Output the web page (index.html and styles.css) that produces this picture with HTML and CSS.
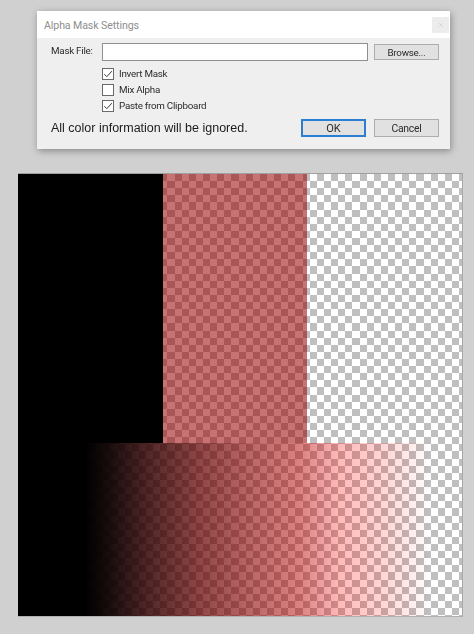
FILE: index.html
```html
<!DOCTYPE html>
<html lang="en">
<head>
<meta charset="utf-8">
<title>Alpha Mask Settings</title>
<link rel="stylesheet" href="styles.css">
</head>
<body>
<section class="dialog">
  <header class="titlebar">
    <span class="title">Alpha Mask Settings</span>
    <span class="close"><svg viewBox="0 0 6 6" width="6" height="6"><path d="M1 1l4 4M5 1L1 5" stroke="#d4d4d4" stroke-width=".8" fill="none"/></svg></span>
  </header>
  <div class="body">
    <div class="file-row">
      <span class="label">Mask File:</span>
      <div class="input"></div>
      <div class="btn browse">Browse...</div>
    </div>
    <div class="checks">
      <div class="check"><span class="box"><svg viewBox="0 0 12 12" width="10" height="10"><path d="M1.6 6.2l3 3L10.6 2.6" stroke="#3a3a3a" stroke-width="1.2" fill="none"/></svg></span>Invert Mask</div>
      <div class="check"><span class="box"></span>Mix Alpha</div>
      <div class="check"><span class="box"><svg viewBox="0 0 12 12" width="10" height="10"><path d="M1.6 6.2l3 3L10.6 2.6" stroke="#3a3a3a" stroke-width="1.2" fill="none"/></svg></span>Paste from Clipboard</div>
    </div>
    <div class="foot">
      <span class="note">All color information will be ignored.</span>
      <div class="btn ok">OK</div>
      <div class="btn cancel">Cancel</div>
    </div>
  </div>
</section>
<main class="canvas">
  <div class="top-row">
    <div class="black"></div>
    <div class="tint"></div>
    <div class="clear"></div>
  </div>
  <div class="ramp"></div>
</main>
</body>
</html>
```
FILE: styles.css
```css
* { box-sizing: border-box; }
html, body { margin: 0; height: 100%; }
body {
  width: 474px;
  height: 634px;
  overflow: hidden;
  background: #d0d0d0;
  padding-top: 11px;
  font-family: Roboto, "Noto Sans", sans-serif;
  font-size: 9.8px;
  letter-spacing: -.25px;
  color: #2b2b2b;
}
.dialog {
  margin-left: 37px;
  width: 413px;
  height: 138px;
  background: #efefef;
  box-shadow: 1px 2px 7px rgba(0,0,0,.35);
  display: flex;
  flex-direction: column;
  filter: blur(.3px);
}
.titlebar {
  height: 27px;
  background: #fff;
  display: flex;
  align-items: center;
  justify-content: space-between;
  padding: 0 1px 0 7px;
}
.title { color: #8e8e8e; font-size: 10.6px; letter-spacing: -.1px; padding-top: 1px; }
.close {
  width: 17px;
  height: 16px;
  background: #ececec;
  display: flex;
  align-items: center;
  justify-content: center;
}
.body {
  flex: 1;
  padding: 5px 11px 12px 14px;
  display: flex;
  flex-direction: column;
}
.file-row { display: flex; align-items: center; height: 18px; }
.label { width: 51px; padding-bottom: 4px; }
.input {
  width: 266px;
  height: 18px;
  margin-right: 6px;
  background: #fff;
  border: 1px solid #8f8f8f;
}
.btn {
  width: 65px;
  display: flex;
  align-items: center;
  justify-content: center;
  background: #e1e1e1;
  border: 1px solid #adadad;
}
.browse { height: 16px; }
.checks {
  margin: 6px 0 0 51px;
  display: flex;
  flex-direction: column;
  gap: 3px;
}
.check { display: flex; align-items: center; height: 13px; }
.box {
  width: 12px;
  height: 12px;
  margin-right: 5px;
  background: #fff;
  border: 1px solid #6a6a6a;
  display: flex;
  align-items: center;
  justify-content: center;
}
.foot { margin-top: auto; display: flex; align-items: center; height: 18px; }
.note {
  flex: 1;
  font-family: "Liberation Sans", Arial, sans-serif;
  font-size: 12.5px;
  letter-spacing: 0;
  color: #1c1c1c;
}
.ok {
  height: 18px;
  margin-right: 8px;
  width: 65px;
  border: 2px solid #2a7fd0;
  font-size: 11px;
  letter-spacing: 0;
}
.cancel { height: 18px; font-size: 10.4px; }
.canvas {
  margin: 24px 0 0 18px;
  width: 445px;
  height: 444px;
  display: flex;
  flex-direction: column;
  background-image:
    linear-gradient(#bfbfbf, #bfbfbf),
    repeating-linear-gradient(90deg, #000 0 7.115px, #fff 7.115px 14.23px),
    repeating-linear-gradient(180deg, #000 0 7.115px, #fff 7.115px 14.23px);
  background-blend-mode: screen, difference, normal;
  border-top: 1px solid #a0a0a0;
  border-right: 1px solid #a8a8a8;
  border-bottom: 1px solid #b0b0b0;
  filter: blur(.3px);
}
.top-row { height: 269px; display: flex; }
.black { width: 145px; background: #000; }
.tint { width: 144px; background: rgba(155, 0, 0, .55); }
.clear { flex: 1; }
.ramp {
  flex: 1;
  background: linear-gradient(90deg, #000 0, #000 67px, rgba(12,0,0,.95) 90px, rgba(50,0,0,.84) 132px, rgba(100,0,0,.72) 182px, rgba(140,0,0,.6) 232px, rgba(180,0,0,.49) 282px, rgba(255,0,0,.27) 322px, rgba(255,0,0,.17) 362px, rgba(255,0,0,.07) 395px, rgba(255,0,0,0) 412px);
}
```
